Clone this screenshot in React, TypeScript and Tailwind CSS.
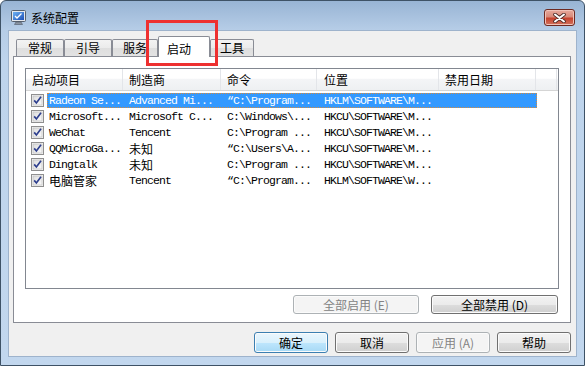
import React from 'react';

const cols = [97, 98, 96, 122, 97];
const headers = ['启动项目', '制造商', '命令', '位置', '禁用日期'];

const rows = [
  ['Radeon Se...', 'Advanced Mi...', '“C:\\Program...', 'HKLM\\SOFTWARE\\M...'],
  ['Microsoft...', 'Microsoft C...', 'C:\\Windows\\...', 'HKCU\\SOFTWARE\\M...'],
  ['WeChat', 'Tencent', 'C:\\Program ...', 'HKCU\\SOFTWARE\\M...'],
  ['QQMicroGa...', '未知', '“C:\\Users\\A...', 'HKCU\\SOFTWARE\\M...'],
  ['Dingtalk', '未知', 'C:\\Program ...', 'HKCU\\SOFTWARE\\M...'],
  ['电脑管家', 'Tencent', '“C:\\Program...', 'HKLM\\SOFTWARE\\W...'],
];

const cjk = "font-['Noto_Sans_CJK_SC',sans-serif] text-[12px]";
const mono = "font-['Liberation_Mono',monospace] text-[11.5px] tracking-[-0.9px]";

const btn =
  'h-full flex items-center justify-center rounded-[3px] border text-[12px] shadow-[inset_0_0_0_1px_#fbfbfb]';
const btnNormal =
  'border-[#707070] text-black bg-[linear-gradient(to_bottom,#f2f2f2_0%,#ebebeb_50%,#dddddd_51%,#cfcfcf_100%)]';
const btnDisabled = 'border-[#adb2b5] text-[#838383] bg-[#f4f4f4]';
const btnDefault =
  'border-[#3c7fb1] text-black bg-[linear-gradient(to_bottom,#eaf6fd_0%,#d9f0fc_50%,#bee6fd_51%,#a7d9f5_100%)] shadow-[inset_0_0_0_1px_#dff3fd]';

const Check = () => (
  <svg width="13" height="13" viewBox="0 0 13 13">
    <defs>
      <linearGradient id="cb" x1="0" y1="0" x2="1" y2="1">
        <stop offset="0" stopColor="#dcdcdc" />
        <stop offset="1" stopColor="#fbfbfb" />
      </linearGradient>
    </defs>
    <rect x="0.5" y="0.5" width="12" height="12" fill="#f4f4f4" stroke="#8f8f8f" />
    <rect x="2" y="2" width="9" height="9" fill="url(#cb)" stroke="#b8b8b8" strokeWidth="0.6" />
    <path d="M3.2 6.4 L5.4 9 L10 2.8" fill="none" stroke="#2e3f8e" strokeWidth="1.7" />
  </svg>
);

const Cell = ({ text, w, pl }: { text: string; w: number; pl: number }) => {
  const isCjk = /[\u4e00-\u9fff]/.test(text);
  return (
    <div
      className={`shrink-0 whitespace-nowrap overflow-hidden leading-[15px] ${isCjk ? cjk : mono}`}
      style={{ width: w, paddingLeft: pl }}
    >
      {text}
    </div>
  );
};

export default function App() {
  return (
    <div className="w-[585px] h-[366px] relative overflow-hidden font-['Noto_Sans_CJK_SC',sans-serif]">
      <div className="w-full h-full flex flex-col rounded-t-[6px] border border-[#3e5266] bg-[linear-gradient(to_bottom,#98b4d4_0px,#b6cde7_29px,#bed4ec_60px,#c2d7ee_100%)]">
        {/* title bar */}
        <div className="h-[29px] shrink-0 flex items-center pt-[4px] pl-[10px] pr-[9px]">
          <svg width="15" height="16" viewBox="0 0 15 16" className="shrink-0">
            <defs>
              <linearGradient id="scr" x1="0" y1="0" x2="1" y2="1">
                <stop offset="0" stopColor="#6fb2f2" />
                <stop offset="1" stopColor="#1c4fb8" />
              </linearGradient>
            </defs>
            <rect x="0.5" y="0.5" width="14" height="11" rx="1" fill="#e6e9ee" stroke="#56606e" />
            <rect x="2" y="2" width="11" height="8" fill="url(#scr)" />
            <path d="M4 6 L6 8 L10.5 3.5" fill="none" stroke="#ffffff" strokeWidth="1.3" />
            <path d="M5 12 L10 12 L11.5 14.5 L3.5 14.5 Z" fill="#8a94a2" stroke="#4e5866" strokeWidth="0.6" />
          </svg>
          <span className="ml-[5px] text-[12px] text-black leading-none">系统配置</span>
          <div className="ml-auto self-start mt-[4px] w-[31px] h-[17px] rounded-[3px] border border-[#6e2a22] flex items-center justify-center bg-[linear-gradient(to_bottom,#e7a99c_0%,#d88a7a_45%,#c6432f_55%,#d2725c_100%)] shadow-[inset_0_0_0_1px_#f0c2b8]">
            <svg width="13" height="10" viewBox="0 0 13 10">
              <path d="M2 1.5 L11 8.5 M11 1.5 L2 8.5" stroke="#4b2a26" strokeWidth="3.6" strokeLinecap="round" />
              <path d="M2 1.5 L11 8.5 M11 1.5 L2 8.5" stroke="#ffffff" strokeWidth="2" strokeLinecap="round" />
            </svg>
          </div>
        </div>

        {/* client */}
        <div className="mx-[7px] w-[569px] h-[327px] shrink-0 border border-[#9eb3cc] bg-[#f0f0f0] px-[4px] pt-[5px] flex flex-col">
          {/* tabs */}
          <div className="flex items-end h-[21px] pl-[3px] relative z-10 -mb-[1px]">
            {['常规', '引导', '服务', '启动', '工具'].map((t, i) => {
              const widths = [48, 48, 46, 52, 44];
              const sel = i === 3;
              return (
                <div
                  key={t}
                  style={{ width: widths[i] }}
                  className={
                    sel
                      ? 'h-[21px] border border-b-0 border-[#898c95] rounded-t-[2px] bg-white flex items-start pt-[3px] pl-[8px] text-[12px] text-black'
                      : 'h-[17px] mb-[1px] border border-b-0 border-[#898c95] rounded-t-[2px] bg-[linear-gradient(to_bottom,#f3f3f3_0%,#ebebeb_50%,#dedede_51%,#e3e3e3_100%)] flex items-center justify-center text-[12px] text-black'
                  }
                >
                  {t}
                </div>
              );
            })}
          </div>

          {/* tab panel */}
          <div className="w-[558px] h-[267px] shrink-0 border border-[#898c95] bg-white pl-[11px] pt-[11px] pb-[8px] flex flex-col">
            <div className="w-[534px] h-[221px] shrink-0 border border-[#828790] bg-white flex flex-col">
              {/* header */}
              <div className="h-[22px] flex border-b border-[#d5d5d5] bg-[linear-gradient(to_bottom,#ffffff_0%,#ffffff_45%,#f4f5f7_46%,#eef0f2_100%)]">
                {headers.map((h, i) => (
                  <div
                    key={h}
                    style={{ width: cols[i], paddingLeft: i === 3 ? 7 : 6 }}
                    className="shrink-0 h-full flex items-center border-r border-[#e3e5e9] text-[12px] text-black"
                  >
                    {h}
                  </div>
                ))}
                <div className="w-[21px] h-full border-r border-[#e3e5e9]" />
              </div>

              {/* rows */}
              <div className="pt-[2px] flex flex-col">
                {rows.map((r, ri) => {
                  const sel = ri === 0;
                  return (
                    <div key={ri} className="h-[16px] flex items-start">
                      <div className="w-[21px] shrink-0 pl-[5px] flex items-center h-[15px]">
                        <Check />
                      </div>
                      <div
                        className={`flex h-[15px] w-[490px] ${
                          sel
                            ? 'bg-[#3399ff] text-white outline-1 outline-dotted outline-[#d88a3c] -outline-offset-1'
                            : 'text-black'
                        }`}
                      >
                        <Cell text={r[0]} w={76} pl={2} />
                        <Cell text={r[1]} w={98} pl={6} />
                        <Cell text={r[2]} w={96} pl={6} />
                        <Cell text={r[3]} w={122} pl={7} />
                        <div className="w-[98px]" />
                      </div>
                    </div>
                  );
                })}
              </div>
            </div>

            <div className="mt-[6px] h-[19px] flex justify-end gap-[12px] pr-[12px]">
              <div className={`w-[126px] ${btn} ${btnDisabled}`}>全部启用 (E)</div>
              <div className={`w-[127px] ${btn} ${btnNormal}`}>全部禁用 (D)</div>
            </div>
          </div>

          {/* dialog buttons */}
          <div className="mt-[9px] h-[21px] flex justify-end gap-[7px] pr-[1px]">
            <div className={`w-[74px] ${btn} ${btnDefault}`}>确定</div>
            <div className={`w-[74px] ${btn} ${btnNormal}`}>取消</div>
            <div className={`w-[74px] ${btn} ${btnDisabled}`}>应用 (A)</div>
            <div className={`w-[74px] ${btn} ${btnNormal}`}>帮助</div>
          </div>
        </div>
      </div>

      {/* red annotation box */}
      <div className="absolute left-[146px] top-[20px] w-[72px] h-[46px] border-[3px] border-[#ee3030] pointer-events-none z-20" />
    </div>
  );
}
